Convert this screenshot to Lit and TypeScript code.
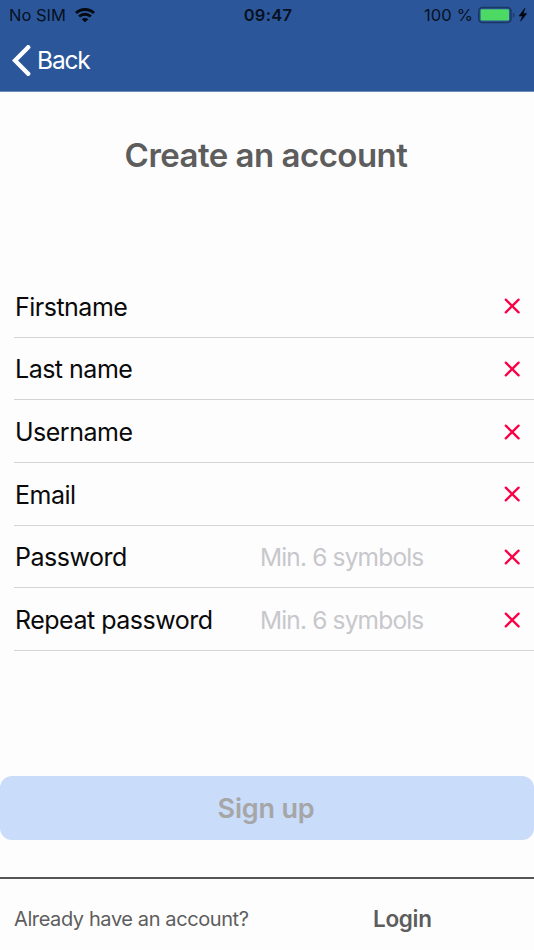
import { LitElement, html, css, nothing } from "lit";
import { customElement, property } from "lit/decorators.js";

@customElement("form-row")
class FormRow extends LitElement {
  @property() label = "";
  @property() hint = "";

  static styles = css`
    :host {
      display: grid;
      grid-template-columns: 245px 1fr 16px;
      align-items: center;
      box-sizing: border-box;
      height: 62.7px;
      margin-left: 14px;
      padding: 1px 14px 0 1px;
      border-bottom: 1px solid #d3d4d6;
      font-size: 25px;
      letter-spacing: -0.5px;
    }
    .label {
      color: #0a0a0a;
      white-space: nowrap;
      padding-top: 0.6px;
    }
    .hint {
      color: #c7c7cc;
      font-size: 24.5px;
      letter-spacing: -0.85px;
    }
    .cross {
      display: block;
      width: 16px;
      height: 16px;
      grid-column: 3;
      grid-row: 1;
    }
  `;

  render() {
    return html`
      <span class="label">${this.label}</span>
      ${this.hint ? html`<span class="hint">${this.hint}</span>` : nothing}
      <svg class="cross" viewBox="0 0 16 16">
        <path d="M1.8 1.6 14.6 14.4M14.6 1.6 1.8 14.4" stroke="#fb0044" stroke-width="2.3" stroke-linecap="round" />
      </svg>
    `;
  }
}

@customElement("app-root")
class AppRoot extends LitElement {
  static styles = css`
    :host {
      display: flex;
      flex-direction: column;
      width: 534px;
      height: 950px;
      overflow: hidden;
      background: #fdfdfe;
      font-family: Inter, "Liberation Sans", sans-serif;
      white-space: nowrap;
    }
    .header {
      height: 91px;
      flex: none;
      background: #2b579a;
      border-bottom: 1px solid #6d8bb8;
      box-sizing: content-box;
    }
    .status {
      display: grid;
      grid-template-columns: 1fr auto 1fr;
      align-items: center;
      height: 30px;
      padding: 0 7px 0 9px;
      font-size: 16.5px;
      color: #06101f;
    }
    .carrier,
    .power {
      display: flex;
      align-items: center;
    }
    .carrier {
      gap: 9px;
    }
    .power {
      justify-content: flex-end;
    }
    .time {
      font-weight: 600;
      letter-spacing: 0.3px;
    }
    .percent {
      letter-spacing: 0.15px;
    }
    .wifi {
      width: 20px;
      height: 15px;
    }
    .battery {
      width: 49px;
      height: 18px;
      margin-left: 5px;
    }
    .back {
      display: flex;
      align-items: center;
      height: 60px;
      padding-left: 12px;
      gap: 6px;
      color: #fff;
      font-size: 24.5px;
      letter-spacing: -1.15px;
    }
    .chevron {
      width: 19px;
      height: 31px;
    }
    .title {
      margin: 42px 0 0;
      padding-right: 2px;
      height: 42px;
      line-height: 42px;
      text-align: center;
      font-size: 33px;
      font-weight: 600;
      letter-spacing: -0.52px;
      color: #5d5d5d;
    }
    .form {
      margin-top: 99px;
      height: 376px;
      flex: none;
    }
    .signup {
      flex: none;
      margin-top: 125px;
      height: 64px;
      border: 0;
      border-radius: 12px;
      background: #c9dcfa;
      color: #a6a6a6;
      font: 600 27px Inter, "Liberation Sans", sans-serif;
      letter-spacing: -0.2px;
      padding: 0 2px 0 0;
    }
    .footer {
      display: grid;
      grid-template-columns: 359px auto;
      align-items: center;
      justify-content: start;
      margin-top: 37px;
      padding-left: 14px;
      height: 80px;
      flex: none;
      border-top: 2px solid #555;
      color: #5d5d5d;
      font-size: 20px;
      letter-spacing: -0.4px;
    }
    .login {
      font-size: 22.5px;
      font-weight: 600;
      letter-spacing: -0.3px;
      padding-bottom: 2px;
    }
  `;

  render() {
    return html`
      <div class="header">
        <div class="status">
          <div class="carrier">
            <span>No SIM</span>
            <svg class="wifi" viewBox="0 0 20 15" fill="none" stroke="#050a12" stroke-width="2.9">
              <path d="M1 5C6 .3 14 .3 19 5M4.1 8.5C7.5 5.4 12.5 5.4 15.9 8.5" />
              <path d="M10 14.2 6.6 11.2C8.6 9.5 11.4 9.5 13.4 11.2Z" fill="#050a12" stroke="none" />
            </svg>
          </div>
          <span class="time">09:47</span>
          <div class="power">
            <span class="percent">100 %</span>
            <svg class="battery" viewBox="0 0 49 18">
              <rect x="0.8" y="1.4" width="32.2" height="15" rx="3.5" fill="#2b579a" stroke="#1b3763" stroke-width="1.5" />
              <rect x="2.6" y="3.3" width="28.4" height="11.2" rx="1.2" fill="#4cd964" />
              <path d="M34.8 6.4C37 7 37 11 34.8 11.6Z" fill="#1b3763" />
              <path d="M47 2 41 10H44.4L42.6 15.2 48.8 7.4H45.3Z" fill="#03070d" stroke="#03070d" stroke-width="0.5" />
            </svg>
          </div>
        </div>
        <div class="back">
          <svg class="chevron" viewBox="0 0 19 31">
            <path d="M16.2 2.2 3 15.5 16.2 28.8" fill="none" stroke="#fff" stroke-width="4.4" stroke-linecap="round" />
          </svg>
          <span>Back</span>
        </div>
      </div>
      <h1 class="title">Create an account</h1>
      <div class="form">
        <form-row label="Firstname"></form-row>
        <form-row label="Last name"></form-row>
        <form-row label="Username"></form-row>
        <form-row label="Email"></form-row>
        <form-row label="Password" hint="Min. 6 symbols"></form-row>
        <form-row label="Repeat password" hint="Min. 6 symbols"></form-row>
      </div>
      <button class="signup">Sign up</button>
      <div class="footer">
        <span>Already have an account?</span>
        <span class="login">Login</span>
      </div>
    `;
  }
}
